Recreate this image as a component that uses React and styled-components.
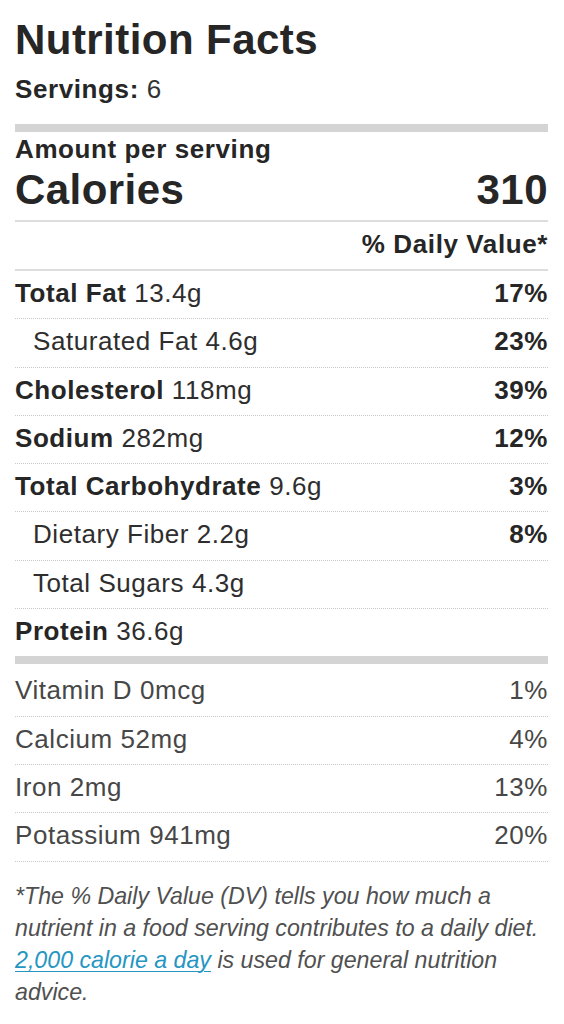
import React from "react";
import styled, { createGlobalStyle } from "styled-components";

const GlobalStyle = createGlobalStyle`
  html, body {
    margin: 0;
    padding: 0;
    background: #ffffff;
  }
  body {
    font-family: "Liberation Sans", Arial, Helvetica, sans-serif;
    color: #333333;
  }
`;

const Label = styled.section`
  box-sizing: border-box;
  width: 564px;
  padding: 15px 16px 24px 15px;
  display: flex;
  flex-direction: column;
`;

const Title = styled.h2`
  margin: 0;
  font-size: 42px;
  letter-spacing: 0.45px;
  line-height: 50px;
  font-weight: 700;
  color: #262626;
`;

const Servings = styled.div`
  margin-top: 8px;
  font-size: 26px;
  letter-spacing: 0.6px;
  line-height: 32px;
  color: #333;
  b {
    font-weight: 700;
    color: #262626;
  }
`;

const ThickBar = styled.div`
  height: 8px;
  background: #d4d4d4;
  margin-top: ${(p) => p.$mt || 0}px;
  margin-bottom: ${(p) => p.$mb || 0}px;
`;

const Amount = styled.div`
  margin-top: 2px;
  font-size: 26px;
  letter-spacing: 0.6px;
  line-height: 30px;
  font-weight: 700;
  color: #262626;
`;

const CaloriesRow = styled.div`
  display: flex;
  justify-content: space-between;
  align-items: baseline;
  margin-top: 3px;
  padding-bottom: 7px;
  border-bottom: 2px solid #dddddd;
  font-size: 42px;
  letter-spacing: 0.45px;
  line-height: 46px;
  font-weight: 700;
  color: #262626;
`;

const DVHeader = styled.div`
  text-align: right;
  padding: 6px 0 9px;
  border-bottom: 2px solid #dddddd;
  font-size: 26px;
  letter-spacing: 0.6px;
  line-height: 32px;
  font-weight: 700;
  color: #262626;
`;

const Row = styled.div`
  display: flex;
  justify-content: space-between;
  align-items: baseline;
  padding: 6px 0 9.3px ${(p) => (p.$indent ? 18 : 0)}px;
  border-bottom: ${(p) => (p.$last ? "none" : "1px dotted #c8c8c8")};
  font-size: 26px;
  letter-spacing: 0.55px;
  line-height: 32px;
  color: ${(p) => (p.$minor ? "#474747" : "#2e2e2e")};
`;

const Name = styled.span`
  font-weight: 700;
  color: #262626;
`;

const Percent = styled.span`
  font-weight: ${(p) => (p.$bold ? 700 : 400)};
  color: ${(p) => (p.$bold ? "#262626" : "#474747")};
`;

const Footnote = styled.p`
  margin: 18px 0 0;
  font-size: 23.2px;
  line-height: 32px;
  font-style: italic;
  color: #505050;
`;

const Link = styled.a`
  color: #2596c2;
  text-decoration: underline;
  text-decoration-thickness: 1px;
  text-underline-offset: 3px;
`;

const nutrients = [
  { name: "Total Fat", amount: "13.4g", pct: "17%" },
  { label: "Saturated Fat", amount: "4.6g", pct: "23%", indent: true },
  { name: "Cholesterol", amount: "118mg", pct: "39%" },
  { name: "Sodium", amount: "282mg", pct: "12%" },
  { name: "Total Carbohydrate", amount: "9.6g", pct: "3%" },
  { label: "Dietary Fiber", amount: "2.2g", pct: "8%", indent: true },
  { label: "Total Sugars", amount: "4.3g", indent: true },
  { name: "Protein", amount: "36.6g", last: true },
];

const vitamins = [
  { label: "Vitamin D", amount: "0mcg", pct: "1%" },
  { label: "Calcium", amount: "52mg", pct: "4%" },
  { label: "Iron", amount: "2mg", pct: "13%" },
  { label: "Potassium", amount: "941mg", pct: "20%" },
];

export default function App() {
  return (
    <>
      <GlobalStyle />
      <Label>
        <Title>Nutrition Facts</Title>
        <Servings>
          <b>Servings:</b> 6
        </Servings>
        <ThickBar $mt={19} />
        <Amount>Amount per serving</Amount>
        <CaloriesRow>
          <span>Calories</span>
          <span>310</span>
        </CaloriesRow>
        <DVHeader>% Daily Value*</DVHeader>
        {nutrients.map((n) => (
          <Row key={n.name || n.label} $indent={n.indent} $last={n.last}>
            <span>
              {n.name ? <Name>{n.name}</Name> : n.label} {n.amount}
            </span>
            {n.pct && <Percent $bold>{n.pct}</Percent>}
          </Row>
        ))}
        <ThickBar $mb={4} />
        {vitamins.map((v) => (
          <Row key={v.label} $minor>
            <span>
              {v.label} {v.amount}
            </span>
            <Percent>{v.pct}</Percent>
          </Row>
        ))}
        <Footnote>
          *The % Daily Value (DV) tells you how much a nutrient in a food
          serving contributes to a daily diet.{" "}
          <Link href="#">2,000 calorie a day</Link> is used for general
          nutrition advice.
        </Footnote>
      </Label>
    </>
  );
}
